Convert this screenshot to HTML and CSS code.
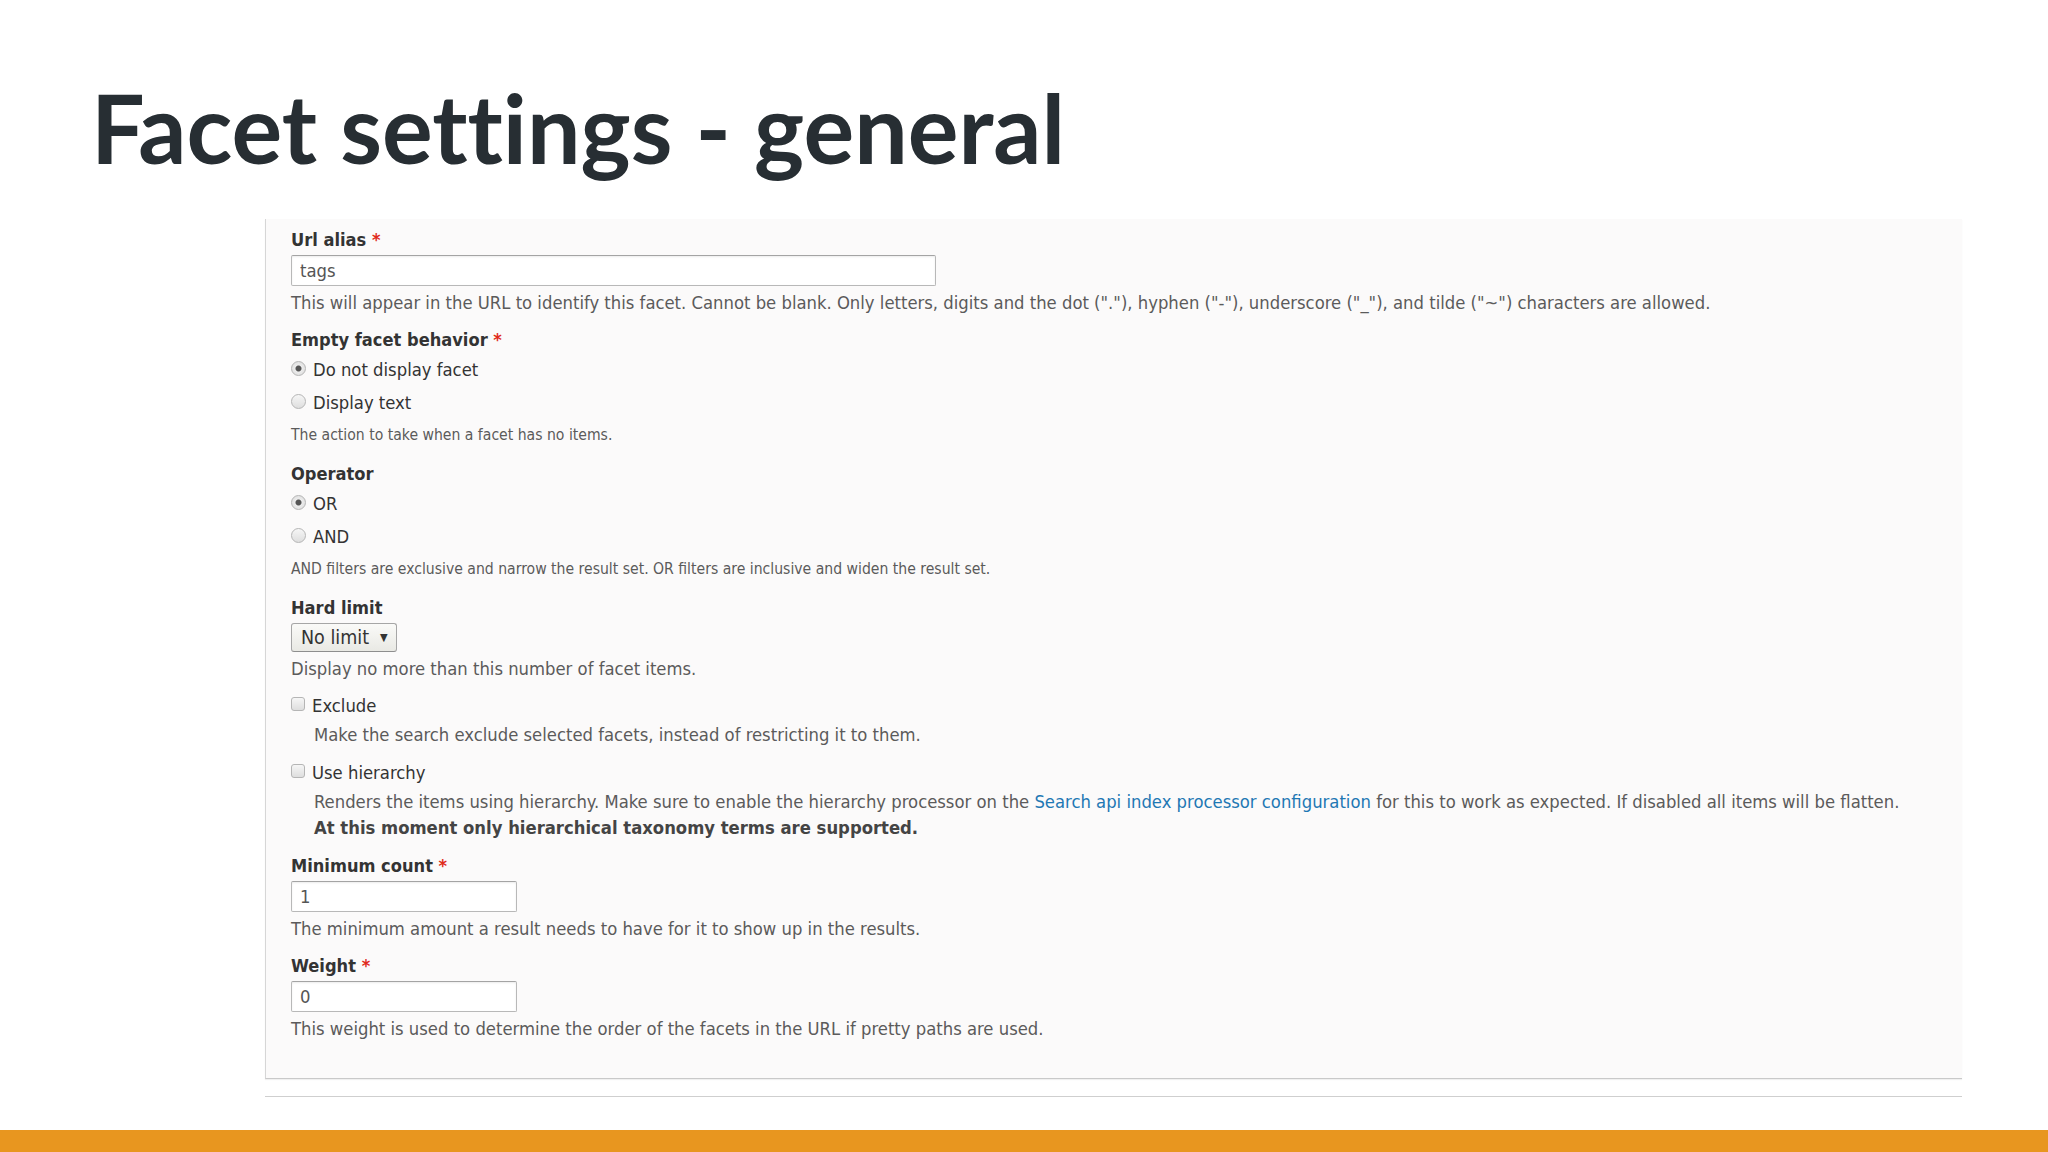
FILE: index.html
```html
<!DOCTYPE html>
<html lang="en">
<head>
    <meta charset="UTF-8">
    <meta name="viewport" content="width=device-width, initial-scale=1.0">
    <title>Facet settings - general</title>
    <link rel="stylesheet" href="styles.css">
</head>
<body>
    <div class="slide">
        <h1 class="title">Facet settings - general</h1>

        <div class="panel">
            <div class="form-item">
                <label class="label">Url alias <span class="req">*</span></label>
                <input class="text wide" type="text" value="tags">
                <div class="desc">This will appear in the URL to identify this facet. Cannot be blank. Only letters, digits and the dot ("."), hyphen ("-"), underscore ("_"), and tilde ("~") characters are allowed.</div>
            </div>

            <div class="form-item group">
                <label class="label">Empty facet behavior <span class="req">*</span></label>
                <div class="radios">
                    <label class="option"><input type="radio" name="empty" checked> Do not display facet</label>
                    <label class="option"><input type="radio" name="empty"> Display text</label>
                </div>
                <div class="desc small">The action to take when a facet has no items.</div>
            </div>

            <div class="form-item group">
                <label class="label">Operator</label>
                <div class="radios">
                    <label class="option"><input type="radio" name="op" checked> OR</label>
                    <label class="option"><input type="radio" name="op"> AND</label>
                </div>
                <div class="desc small">AND filters are exclusive and narrow the result set. OR filters are inclusive and widen the result set.</div>
            </div>

            <div class="form-item">
                <label class="label">Hard limit</label>
                <span class="select">No limit <span class="arrow">&#9660;</span></span>
                <div class="desc">Display no more than this number of facet items.</div>
            </div>

            <div class="form-item check">
                <label class="option"><input type="checkbox"> Exclude</label>
                <div class="desc indent">Make the search exclude selected facets, instead of restricting it to them.</div>
            </div>

            <div class="form-item check">
                <label class="option"><input type="checkbox"> Use hierarchy</label>
                <div class="desc indent">Renders the items using hierarchy. Make sure to enable the hierarchy processor on the <a href="#">Search api index processor configuration</a> for this to work as expected. If disabled all items will be flatten.</div>
                <div class="desc indent strong">At this moment only hierarchical taxonomy terms are supported.</div>
            </div>

            <div class="form-item">
                <label class="label">Minimum count <span class="req">*</span></label>
                <input class="text narrow" type="text" value="1">
                <div class="desc">The minimum amount a result needs to have for it to show up in the results.</div>
            </div>

            <div class="form-item">
                <label class="label">Weight <span class="req">*</span></label>
                <input class="text narrow" type="text" value="0">
                <div class="desc">This weight is used to determine the order of the facets in the URL if pretty paths are used.</div>
            </div>
        </div>
        <div class="rule"></div>

        <div class="footer-bar"></div>
    </div>
</body>
</html>
```

FILE: styles.css
```css
body {
    margin: 0;
    background-color: #fff;
}
.slide {
    display: flex;
    flex-direction: column;
    height: 1152px;
    overflow: hidden;
}
.title {
    margin: 0;
    padding: 79px 0 0 91px;
    height: 219px;
    box-sizing: border-box;
    font-family: Lato, "Open Sans", sans-serif;
    font-weight: 700;
    font-size: 95px;
    line-height: 96px;
    font-variant-ligatures: none;
    color: #272e33;
}
.panel {
    margin-left: 265px;
    width: 1697px;
    box-sizing: border-box;
    padding: 10px 25px 23px;
    background-color: #fbfafa;
    border-left: 1px solid #d6d6d6;
    border-bottom: 1px solid #c9c9c9;
    box-shadow: 0 1px 1px rgba(0, 0, 0, 0.06);
    font-family: "DejaVu Sans Condensed", "DejaVu Sans", sans-serif;
    font-stretch: condensed;
    font-size: 18.3px;
    color: #333;
}
.form-item {
    display: flex;
    flex-direction: column;
    align-items: flex-start;
    margin-bottom: 15px;
}
.form-item.group {
    margin-bottom: 18px;
}
.form-item.check {
    margin-bottom: 16px;
}
.label {
    font-weight: 700;
    font-size: 18.1px;
    line-height: 22px;
    color: #333;
}
.req {
    color: #e02a1a;
}
.text {
    margin-top: 4px;
    height: 31px;
    box-sizing: border-box;
    padding: 0 8px;
    border: 1px solid #b8b8b8;
    border-top-color: #a4a4a4;
    border-radius: 2px;
    background: #fff;
    font-family: inherit;
    font-stretch: condensed;
    font-size: 18.3px;
    color: #555;
    box-shadow: inset 0 1px 2px rgba(0, 0, 0, 0.08);
}
.wide {
    width: 645px;
}
.narrow {
    width: 226px;
}
.desc {
    margin-top: 6px;
    line-height: 22px;
    color: #5b5b5b;
}
.desc.small {
    margin-top: 11px;
    font-size: 15.6px;
    line-height: 20px;
}
.desc.indent {
    margin-left: 23px;
    margin-top: 7px;
}
.desc.strong {
    margin-top: 4px;
    font-weight: 700;
    color: #444;
}
.desc a {
    color: #1f78b4;
    text-decoration: none;
}
.radios {
    display: flex;
    flex-direction: column;
    gap: 11px;
    margin-top: 8px;
}
.option {
    display: flex;
    align-items: center;
    gap: 7px;
    line-height: 22px;
    color: #333;
}
.option input {
    appearance: none;
    margin: 0;
    width: 15px;
    height: 15px;
    position: relative;
    top: -2px;
    border: 1px solid #b5b5b5;
    background: linear-gradient(#f6f6f6, #dedede);
}
.option input[type="radio"] {
    border-radius: 50%;
}
.option input[type="radio"]:checked {
    background: radial-gradient(circle, #555 0, #555 2.5px, #ececec 3.5px, #d9d9d9 100%);
}
.option input[type="checkbox"] {
    width: 14px;
    height: 14px;
    border-radius: 3px;
}
.select {
    display: flex;
    align-items: center;
    gap: 11px;
    margin-top: 4px;
    height: 29px;
    box-sizing: border-box;
    padding: 0 8px 0 9px;
    border: 1px solid #a6a6a6;
    border-bottom-color: #8e8e8e;
    border-radius: 3px;
    background: linear-gradient(#fafaf8, #e9e9e4);
    font-size: 19.5px;
    color: #333;
}
.arrow {
    font-size: 11px;
    color: #333;
}
.rule {
    margin: 17px 0 0 265px;
    width: 1697px;
    border-top: 1px solid #cfcfcf;
}
.footer-bar {
    margin-top: auto;
    height: 22px;
    background-color: #e8961f;
}
```
